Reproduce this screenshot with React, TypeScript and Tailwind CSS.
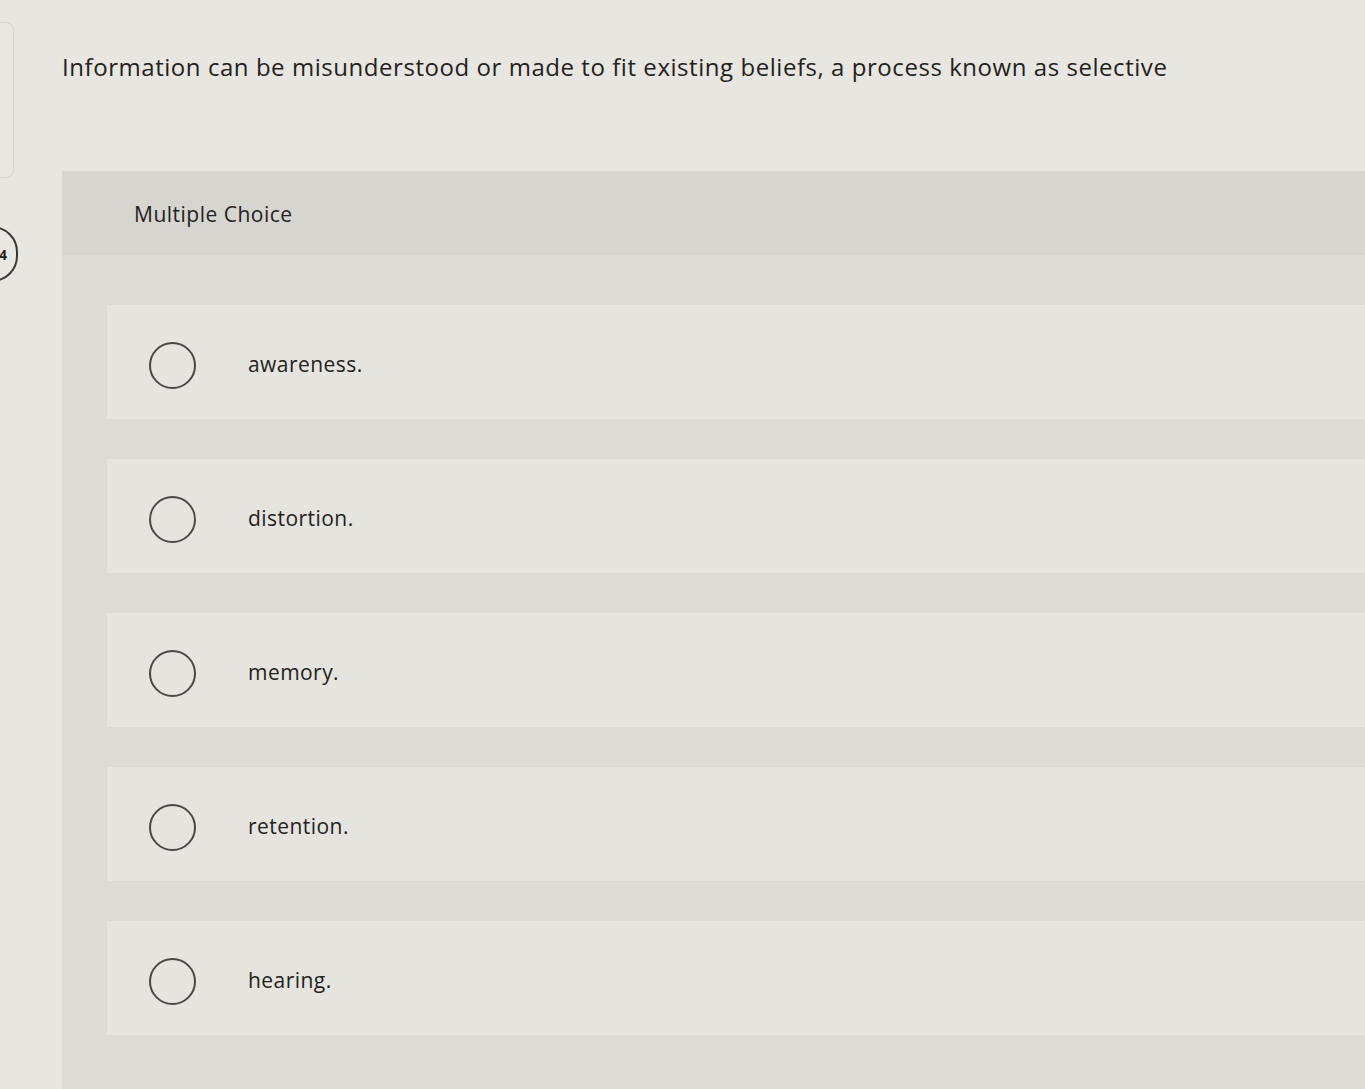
import React from 'react';

const options = ['awareness.', 'distortion.', 'memory.', 'retention.', 'hearing.'];

export default function App() {
    return (
        <div className="relative w-[1365px] h-[1089px] overflow-hidden bg-[#e8e6e1] text-[#232220]" style={{ fontFamily: '"Open Sans", Lato, sans-serif' }}>
            {/* left rail card edge */}
            <div className="absolute left-[-20px] top-[22px] w-[34px] h-[156px] rounded-[8px] border border-[#d2d0ca] bg-[#e9e7e2]" />
            {/* question number bubble */}
            <div className="absolute left-[-34px] top-[226px] w-[52px] h-[56px] rounded-full border-2 border-[#3a3936] bg-[#e9e7e2] flex items-center justify-end pr-[9px] text-[14px] font-bold">
                4
            </div>

            <div className="pl-[62px] pt-[49px]">
                <p className="text-[24px] leading-[36px] tracking-[0.55px]">
                    Information can be misunderstood or made to fit existing beliefs, a process known as selective
                </p>

                <div className="mt-[86px] bg-[#dddbd5]">
                    <div className="h-[84px] bg-[#d7d5cf] flex items-center pl-[72px] text-[21px] tracking-[0.5px] pt-[4px]">
                        Multiple Choice
                    </div>
                    <div className="pl-[45px] pt-[50px] pb-[60px] flex flex-col gap-[40px]">
                        {options.map((o) => (
                            <div key={o} className="h-[114px] bg-[#e6e4df] flex items-center pt-[6px]">
                                <div className="ml-[42px] w-[47px] h-[47px] rounded-full border-2 border-[#4a4946]" />
                                <span className="ml-[52px] text-[21px] tracking-[0.45px]">{o}</span>
                            </div>
                        ))}
                    </div>
                </div>
            </div>
        </div>
    );
}
